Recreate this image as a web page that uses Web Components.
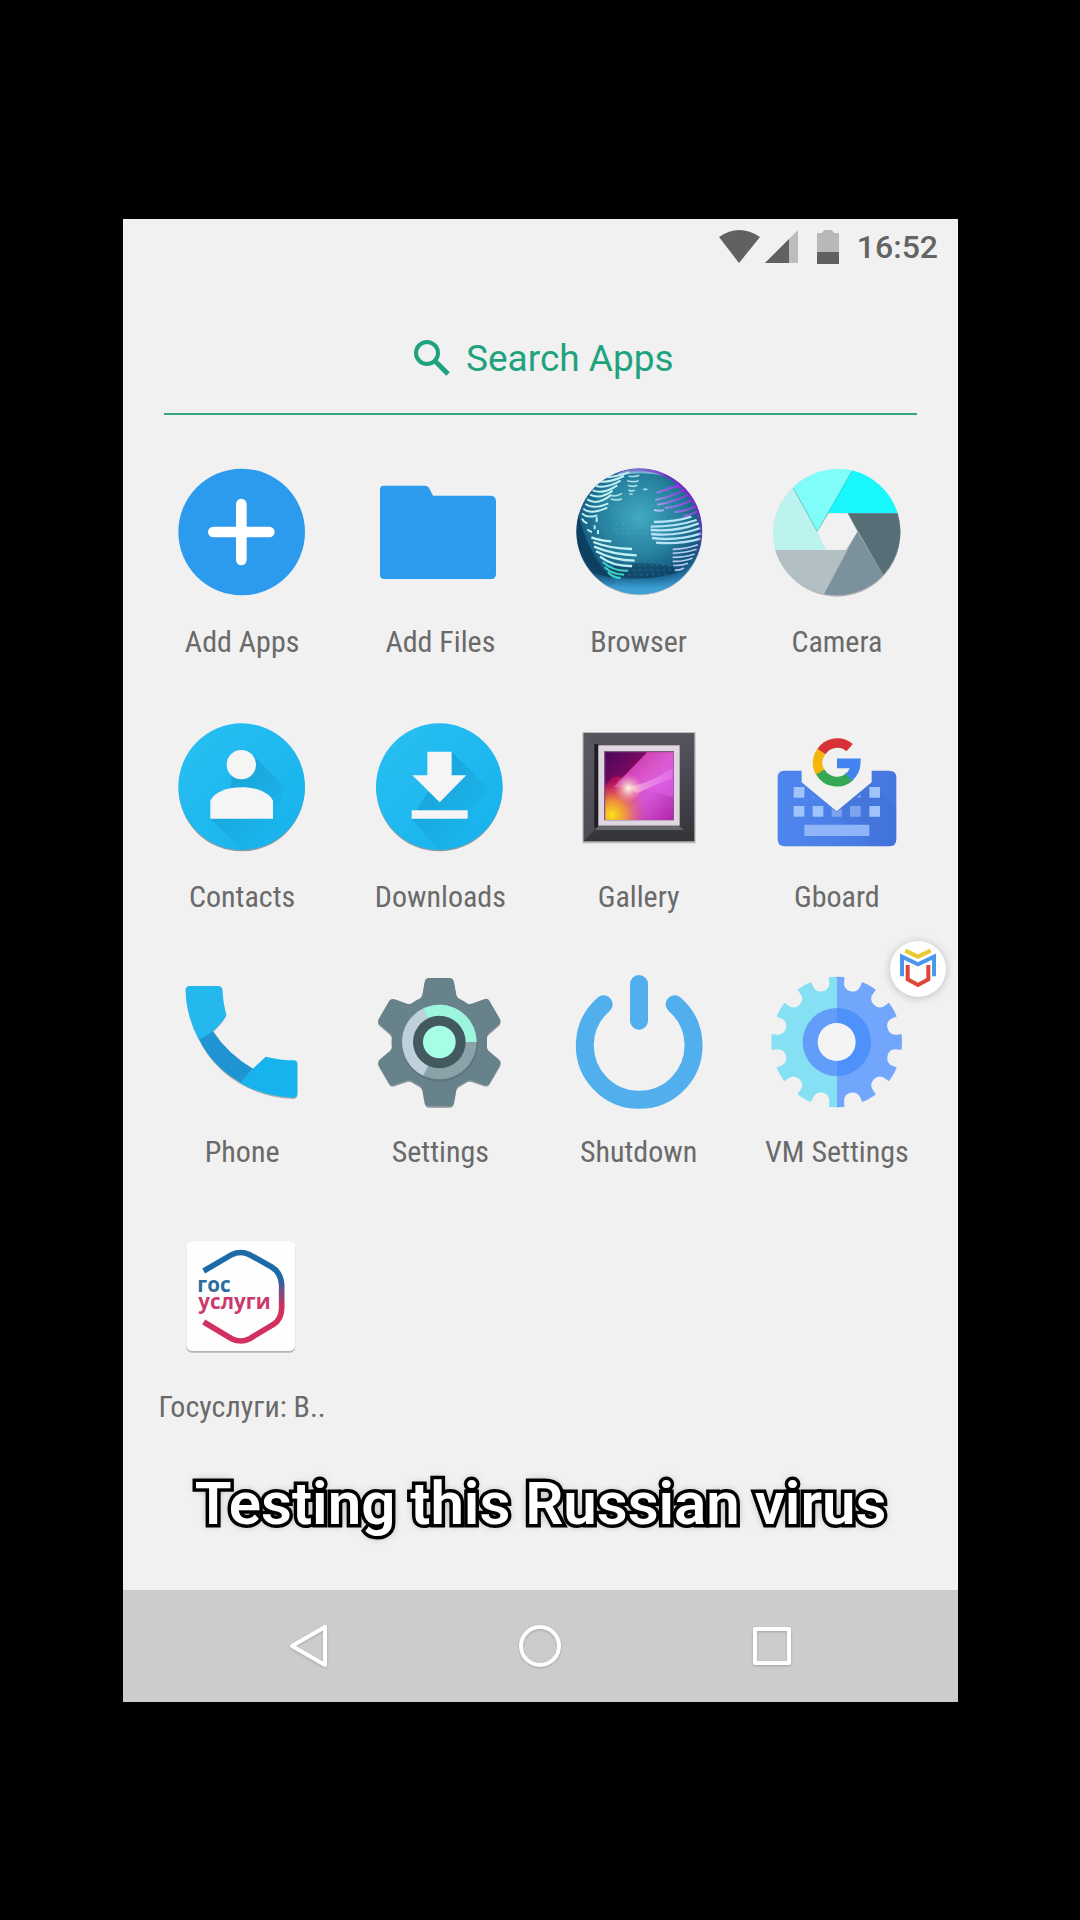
<!DOCTYPE html>
<html lang="en">
<head>
<meta charset="utf-8">
<meta name="viewport" content="width=device-width, initial-scale=1">
<title>App drawer</title>
<style>
  body { margin: 0; background: #000; font-family: "Roboto Condensed", Roboto, "Noto Sans", sans-serif; }
</style>
</head>
<body>
<app-stage>
  <phone-screen>
    <status-bar slot="status" time="16:52"></status-bar>
    <search-field placeholder="Search Apps"></search-field>
    <app-grid>
      <app-tile label="Add Apps">
        <svg viewBox="63 57 432 432" aria-hidden="true">
          <circle cx="278" cy="276" r="190" fill="#2c9bee"/>
          <path d="M277 192V360M193 276H361" stroke="#fff" stroke-width="32" stroke-linecap="round"/>
        </svg>
      </app-tile>
      <app-tile label="Add Files">
        <svg viewBox="657 57 432 432" aria-hidden="true">
          <path d="M704 137H828Q838 137 843 149L852 167H1024Q1041 167 1041 184V402Q1041 417 1026 417H706Q693 417 693 404V149Q693 137 704 137Z" fill="#2c9bee"/>
        </svg>
      </app-tile>
      <app-tile label="Browser">
        <svg viewBox="51 57 432 432" aria-hidden="true">
          <defs>
            <radialGradient id="ocean" cx=".5" cy=".38" r=".62"><stop offset="0" stop-color="#42a9c0"/><stop offset=".5" stop-color="#26819f"/><stop offset=".85" stop-color="#125279"/><stop offset="1" stop-color="#2d7fb4"/></radialGradient>
            <linearGradient id="pole" x1="0" y1="0" x2="0" y2="1"><stop offset="0" stop-color="#2788bd" stop-opacity="0"/><stop offset=".7" stop-color="#3d9fd4"/></linearGradient>
            <linearGradient id="neon" x1="300" y1="220" x2="400" y2="130" gradientUnits="userSpaceOnUse"><stop offset="0" stop-color="#b9e8f8"/><stop offset=".5" stop-color="#8f6fe0"/><stop offset="1" stop-color="#8a25d8"/></linearGradient>
            <linearGradient id="rim" x1="0" y1="1" x2="1" y2="0"><stop offset=".6" stop-color="#8227d0" stop-opacity="0"/><stop offset=".9" stop-color="#8227d0"/></linearGradient>
            <clipPath id="disc"><circle cx="268" cy="274" r="189"/></clipPath>
          </defs>
          <circle cx="268" cy="277" r="189" fill="#7b8fa0" opacity=".5"/>
          <g clip-path="url(#disc)" fill="none">
            <circle cx="268" cy="274" r="189" fill="url(#ocean)"/>
            <path d="M80 200Q110 350 200 430L150 450L70 350Z" fill="#0a3656" opacity=".7"/>
            <ellipse cx="275" cy="392" rx="105" ry="22" fill="#0b3456" opacity=".5"/>
            <path d="M130 400Q270 440 400 390V470H130Z" fill="url(#pole)"/>
            <path d="M205 100Q250 78 330 92L345 108Q270 92 205 108Z" fill="#7eb3d4"/>
            <g stroke="#bff0f4" stroke-width="6">
              <path d="M165 112Q195 112 238 96M150 125Q180 128 222 108M138 138Q170 146 212 122M128 151Q160 164 202 136M120 164Q150 180 188 152M112 178Q140 198 182 166M106 192Q130 210 175 190M100 206Q120 226 172 203M96 220Q112 236 142 226"/>
              <path d="M180 165Q198 172 216 160M182 177Q198 182 216 177M236 108Q254 112 268 106M232 122Q250 128 266 122M234 136Q248 142 262 136M236 150Q244 156 254 150M238 162H248M280 148H292" stroke-width="5" opacity=".85"/>
              <path d="M96 236Q102 248 112 250M112 268Q118 274 126 276M140 232V246M134 256V268M144 270V282"/>
              <path d="M124 292Q150 302 184 304M130 306Q180 326 246 327M132 320Q188 344 260 346M138 334Q190 362 254 362M150 350Q190 380 246 378" stroke-width="7"/>
              <path d="M158 366Q190 394 234 392M164 382Q188 404 222 404M174 396Q190 414 212 414" stroke="#3ed3c4"/>
              <path d="M312 246Q376 246 424 230M302 260Q380 260 440 240M302 270Q380 276 446 250M303 282Q380 290 452 264M306 294Q380 304 454 280M318 308Q390 314 452 296" stroke="#b8e2f6" stroke-width="7"/>
              <path d="M368 328Q410 326 444 314M368 340Q410 338 440 328M368 352Q406 352 434 342M368 364Q400 366 428 354M370 376Q396 378 414 370M374 390Q388 392 402 384" stroke="#b8c8f0" stroke-width="5"/>
            </g>
            <path d="M320 158Q350 150 396 132M316 180Q360 172 412 146M322 194Q366 188 424 160M312 210Q330 214 342 210M345 204Q390 200 434 176M356 142H390M374 216Q410 214 442 196M400 228Q426 224 448 210" stroke="url(#neon)" stroke-width="6"/>
            <g stroke="#6cc3d4" stroke-width="3" stroke-dasharray="4 14" opacity=".45"><path d="M210 235H300M200 250H300M195 265H300M200 280H300M230 376H370M232 390H366M236 404H360"/></g>
            <circle cx="268" cy="274" r="185" stroke="url(#rim)" stroke-width="9"/>
          </g>
        </svg>
      </app-tile>
      <app-tile label="Camera">
        <svg viewBox="645 57 432 432" aria-hidden="true">
          <circle cx="861" cy="280" r="190" fill="#777" opacity=".5"/>
          <path d="M905 91A190 190 0 0 1 1043 220H830Z" fill="#18f7fb"/>
          <path d="M1043 220A190 190 0 0 1 1000 405L893 220Z" fill="#566e76"/>
          <path d="M1000 405A190 190 0 0 1 822 462L922 275Z" fill="#7b929c"/>
          <path d="M822 462A190 190 0 0 1 675 330H890Z" fill="#b2c0c4"/>
          <path d="M675 330A190 190 0 0 1 730 142L832 330Z" fill="#bdf3ef"/>
          <path d="M730 142A190 190 0 0 1 907 91L802 275Z" fill="#80fdf8"/>
          <path d="M730 145L802 275L905 95" fill="none" stroke="#37b7b5" stroke-width="3" opacity=".6"/>
          <path d="M836 220H893L922 275L888 330H828L802 275Z" fill="#f1f1f1"/>
        </svg>
      </app-tile>
      <app-tile label="Contacts">
        <svg viewBox="63 42 432 432" aria-hidden="true">
          <defs>
            <linearGradient id="sky" x1="0" y1="0" x2="1" y2="1"><stop offset="0" stop-color="#29bff2"/><stop offset="1" stop-color="#16b2ed"/></linearGradient>
            <linearGradient id="cast" x1="0" y1="0" x2="1" y2="1"><stop offset=".2" stop-color="#0c82b4" stop-opacity=".4"/><stop offset=".8" stop-color="#0c82b4" stop-opacity="0"/></linearGradient>
          </defs>
          <circle cx="278" cy="265" r="189" fill="#66757d" opacity=".7"/>
          <circle cx="278" cy="260" r="190" fill="url(#sky)"/>
          <path d="M309 162L408 261L373 356L430 372Q365 450 278 450L186 356L245 270L248 224Z" fill="url(#cast)"/>
          <circle cx="277" cy="194" r="44" fill="#f5f5f5"/>
          <path d="M184 356V302C196 278 232 262 278 262S360 278 372 302V356Z" fill="#f5f5f5"/>
        </svg>
      </app-tile>
      <app-tile label="Downloads">
        <svg viewBox="657 42 432 432" aria-hidden="true">
          <defs>
            <linearGradient id="sky2" x1="0" y1="0" x2="1" y2="1"><stop offset="0" stop-color="#29bff2"/><stop offset="1" stop-color="#16b2ed"/></linearGradient>
            <linearGradient id="cast2" x1="0" y1="0" x2="1" y2="1"><stop offset=".2" stop-color="#0c82b4" stop-opacity=".4"/><stop offset=".8" stop-color="#0c82b4" stop-opacity="0"/></linearGradient>
          </defs>
          <circle cx="871" cy="265" r="189" fill="#66757d" opacity=".7"/>
          <circle cx="871" cy="260" r="190" fill="url(#sky2)"/>
          <path d="M908 155L1025 272L956 332V356L1000 400Q940 450 871 450L788 356Z" fill="url(#cast2)"/>
          <path d="M835 155H908V226H952L872 307L790 226H835ZM788 331H956V356H788Z" fill="#f5f5f5"/>
        </svg>
      </app-tile>
      <app-tile label="Gallery">
        <svg viewBox="51 42 432 432" aria-hidden="true">
          <defs>
            <linearGradient id="frame" x1="0" y1="0" x2="0" y2="1"><stop offset="0" stop-color="#57565f"/><stop offset="1" stop-color="#353439"/></linearGradient>
            <linearGradient id="art" x1="0" y1="0" x2="1" y2="1"><stop offset="0" stop-color="#4a0858"/><stop offset=".3" stop-color="#b80e5c"/><stop offset=".48" stop-color="#d94ca4"/><stop offset=".62" stop-color="#d659da"/><stop offset="1" stop-color="#b326a8"/></linearGradient>
            <radialGradient id="glow" cx="185" cy="345" r="105" gradientUnits="userSpaceOnUse"><stop offset="0" stop-color="#f8e418"/><stop offset=".4" stop-color="#f3a02a" stop-opacity=".85"/><stop offset="1" stop-color="#e03a60" stop-opacity="0"/></radialGradient>
            <radialGradient id="flare" cx="235" cy="265" r="42" gradientUnits="userSpaceOnUse"><stop offset="0" stop-color="#fffce0"/><stop offset="1" stop-color="#ffb0b0" stop-opacity="0"/></radialGradient>
            <linearGradient id="beam" x1="235" y1="270" x2="370" y2="215" gradientUnits="userSpaceOnUse"><stop offset="0" stop-color="#ffd9f0"/><stop offset="1" stop-color="#f48cf4" stop-opacity=".5"/></linearGradient>
          </defs>
          <rect x="97" y="96" width="340" height="334" fill="#bcbcbc"/>
          <rect x="101" y="99" width="332" height="325" fill="url(#frame)"/>
          <path d="M101 424L133 390V135L101 99Z" fill="#5d5c62" opacity=".6"/>
          <rect x="133" y="132" width="12" height="250" fill="#1f1e24"/>
          <path d="M146 378H388L402 390H134Z" fill="#66666a"/>
          <rect x="145" y="136" width="244" height="241" fill="#dfd6e2"/>
          <rect x="162" y="153" width="210" height="208" fill="#7a5c80"/>
          <rect x="166" y="157" width="204" height="203" fill="url(#art)"/>
          <path d="M292 157H370V290L240 262L190 262Z" fill="#dc5fe4" opacity=".65"/>
          <path d="M166 157H290L215 235Q190 215 166 260Z" fill="#4c0760" opacity=".6"/>
          <path d="M232 262Q300 250 368 205V235Q300 260 262 280Z" fill="url(#beam)" opacity=".6"/>
          <rect x="166" y="157" width="204" height="203" fill="url(#glow)"/>
          <rect x="166" y="157" width="204" height="203" fill="url(#flare)"/>
        </svg>
      </app-tile>
      <app-tile label="Gboard">
        <svg viewBox="645 42 432 432" aria-hidden="true">
          <defs><linearGradient id="deck" x1="0" y1="0" x2="1" y2="0"><stop offset="0" stop-color="#4f86ee"/><stop offset="1" stop-color="#4577df"/></linearGradient></defs>
          <path d="M702 212H755V247L860 334L965 247V212H1018Q1039 212 1039 233V418Q1039 439 1018 439H704Q683 439 683 418V233Q683 212 702 212Z" fill="url(#deck)"/>
          <path d="M860 334L965 247L1039 320V420Q1036 439 1018 439H965Z" fill="#3560c4" opacity=".15"/>
          <path d="M731 261H763V293H731ZM958 261H990V293H958ZM731 318H763V350H731ZM788 318H820V350H788ZM958 318H990V350H958Z" fill="#9fc3fb"/>
          <path d="M900 318H932V350H900ZM845 325L860 337L875 325V350H845ZM788 288L795 293H788ZM925 288L932 283V293H920Z" fill="#7ea4ee"/>
          <path d="M763 374H958V408H763Z" fill="#8fb5f8"/>
          <g fill="none" stroke-width="29">
            <path d="M899 143A57 57 0 0 0 814 155" stroke="#d83238"/>
            <path d="M814 155A57 57 0 0 0 811 218" stroke="#f4b60c"/>
            <path d="M811 216A57 57 0 0 0 901 228" stroke="#35a853"/>
            <path d="M896 232A57 57 0 0 0 917 190H861" stroke="#4383f0"/>
          </g>
        </svg>
      </app-tile>
      <app-tile label="Phone">
        <svg viewBox="63 27 432 432" aria-hidden="true">
          <path d="M122 81H207Q219 81 220 92Q221 130 232 168Q220 190 194 215Q235 280 310 328L350 293Q395 303 434 304Q445 304 445 315V403Q445 416 434 417Q345 414 270 370Q190 322 150 240Q112 170 110 94Q110 81 122 81Z" fill="#8a949a" opacity=".7"/>
          <path d="M150 238L190 212Q235 280 312 326L275 368Q190 320 150 238Z" fill="#2094d2"/>
          <path d="M122 78H207Q219 78 220 89Q222 130 232 166Q220 188 192 214L150 240Q112 170 110 91Q110 78 122 78Z" fill="#25b8ef"/>
          <path d="M272 368L312 326L350 290Q395 301 434 301Q445 301 445 312V400Q445 413 434 413Q345 410 272 368Z" fill="#17b3ef"/>
        </svg>
      </app-tile>
      <app-tile label="Settings">
        <svg viewBox="657 27 432 432" aria-hidden="true">
          <defs>
            <g id="cog">
              <circle cx="871" cy="246" r="143"/>
              <path id="t" d="M827 66Q829 54 840 54H902Q912 54 915 66L922 105Q928 122 960 134L871 246L782 134Q814 122 820 105Z"/>
              <use href="#t" transform="rotate(60 871 246)"/><use href="#t" transform="rotate(120 871 246)"/><use href="#t" transform="rotate(180 871 246)"/><use href="#t" transform="rotate(240 871 246)"/><use href="#t" transform="rotate(300 871 246)"/>
            </g>
          </defs>
          <use href="#cog" y="5" fill="#4b5a61" opacity=".6"/>
          <use href="#cog" fill="#68828b"/>
          <circle cx="872" cy="251" r="114" fill="#4f666e" opacity=".5"/>
          <circle cx="871" cy="246" r="112" fill="#8ba2a9"/>
          <path d="M871 246L823 145A112 112 0 0 0 823 347Z" fill="#bfd0da"/>
          <path d="M871 246L823 145A112 112 0 0 1 983 246Z" fill="#9cf6de"/>
          <circle cx="871" cy="246" r="79" fill="#435960"/>
          <circle cx="871" cy="246" r="49" fill="#a5fee5"/>
        </svg>
      </app-tile>
      <app-tile label="Shutdown">
        <svg viewBox="51 27 432 432" aria-hidden="true">
          <path d="M161 133A163 163 0 1 0 374 133M267 72V182" fill="none" stroke="#52afee" stroke-width="54" stroke-linecap="round"/>
        </svg>
      </app-tile>
      <app-tile label="VM Settings">
        <svg viewBox="645 27 432 432" aria-hidden="true">
          <defs>
            <path id="b" d="M830 36L834 62Q836 88 860 88Q884 88 886 62L890 36Z"/>
            <mask id="teeth" maskUnits="userSpaceOnUse" x="645" y="27" width="432" height="432">
              <circle cx="860" cy="246" r="196" fill="#fff"/>
              <use href="#b" transform="rotate(15 860 246)"/><use href="#b" transform="rotate(45 860 246)"/><use href="#b" transform="rotate(75 860 246)"/>
              <use href="#b" transform="rotate(105 860 246)"/><use href="#b" transform="rotate(135 860 246)"/><use href="#b" transform="rotate(165 860 246)"/>
              <use href="#b" transform="rotate(195 860 246)"/><use href="#b" transform="rotate(225 860 246)"/><use href="#b" transform="rotate(255 860 246)"/>
              <use href="#b" transform="rotate(285 860 246)"/><use href="#b" transform="rotate(315 860 246)"/><use href="#b" transform="rotate(345 860 246)"/>
            </mask>
          </defs>
          <g mask="url(#teeth)"><path d="M645 27H861V459H645Z" fill="#84e0f2"/><path d="M861 27H1077V459H861Z" fill="#71a6fc"/></g>
          <circle cx="860" cy="246" r="102" fill="#629dfa"/>
          <path d="M861 144A102 102 0 0 1 861 348Z" fill="#4f91fb"/>
          <circle cx="860" cy="246" r="57" fill="#f4f4f4"/>
        </svg>
      </app-tile>
      <app-tile label="Госуслуги: В..">
        <svg viewBox="93 12 432 432" aria-hidden="true">
          <defs><linearGradient id="flag" x1="0" y1="88" x2="0" y2="372" gradientUnits="userSpaceOnUse"><stop offset=".3" stop-color="#1d6ba6"/><stop offset=".6" stop-color="#d0315f"/></linearGradient></defs>
          <rect x="142" y="68" width="327" height="330" rx="17" fill="#b4b4b4"/>
          <rect x="142" y="64" width="327" height="329" rx="17" fill="#fefefe"/>
          <path d="M194 153L278 104Q304 91 332 104L398 141Q426 158 428 195V263Q428 298 402 314L332 356Q304 370 278 356L194 306" fill="none" stroke="url(#flag)" stroke-width="17"/>
          <text font-family="Open Sans, sans-serif" font-weight="700" font-size="62" fill="#2a6ca0"><tspan x="175" y="217">гос</tspan><tspan x="178" y="268" fill="#cc3a6c">услуги</tspan></text>
        </svg>
      </app-tile>
    </app-grid>
    <video-caption>Testing this Russian virus</video-caption>
    <nav-bar slot="nav"></nav-bar>
    <float-badge slot="float"></float-badge>
  </phone-screen>
</app-stage>

<script>
  const define = (name, html, setup) => customElements.define(name, class extends HTMLElement {
    constructor() {
      super();
      this.attachShadow({ mode: 'open' }).innerHTML = html;
    }
    connectedCallback() { if (setup) setup(this, this.shadowRoot); }
  });

  define('app-stage', `
    <style>
      :host { display: flex; flex-direction: column; justify-content: center; min-height: 100vh; padding: 0 122px 0 123px; box-sizing: border-box; background: #000; }
    </style><slot></slot>`);

  define('phone-screen', `
    <style>
      :host { display: flex; flex-direction: column; position: relative; background: #f1f1f1; }
      main { display: flex; flex-direction: column; }
    </style>
    <slot name="status"></slot><main><slot></slot></main><slot name="nav"></slot><slot name="float"></slot>`);

  define('status-bar', `
    <style>
      :host { display: flex; align-items: center; justify-content: flex-end; height: 56px; padding-right: 20px; font: 500 32px/40px Roboto, sans-serif; color: #646464; }
      svg { display: block; height: 34px; }
      .wifi { width: 41px; margin-right: 5px; }
      .cell { width: 33px; margin-right: 19px; }
      .battery { width: 22px; margin-right: 18px; }
    </style>
    <svg class="wifi" viewBox="0 0 41 34" aria-hidden="true"><path d="M0 7Q20 -7 41 7L20 33Z" fill="#616161"/></svg>
    <svg class="cell" viewBox="0 0 33 34" aria-hidden="true"><path d="M0 33L33 0V33Z" fill="#bdbdbd"/><path d="M0 33L24 9V33Z" fill="#616161"/></svg>
    <svg class="battery" viewBox="0 0 22 34" aria-hidden="true"><path d="M0 3H5L7 0H15L17 3H22V22H0Z" fill="#b8b8b8"/><path d="M0 22H22V34H0Z" fill="#616161"/></svg>
    <time></time>`,
    (el, root) => { root.querySelector('time').textContent = el.getAttribute('time'); });

  define('search-field', `
    <style>
      :host { display: block; margin: 0 41px; padding: 60px 0 30px; border-bottom: 2px solid #35a585; }
      label { display: flex; align-items: center; justify-content: center; gap: 15px; padding-left: 10px; }
      svg { display: block; width: 38px; height: 38px; }
      input { width: 212px; height: 48px; padding: 0; border: 0; outline: 0; background: none; font: 400 37px/48px Roboto, sans-serif; color: #1fa37e; }
      input::placeholder { color: #1fa37e; opacity: 1; }
    </style>
    <label><svg viewBox="0 0 38 38" aria-hidden="true"><circle cx="14" cy="13" r="11" fill="none" stroke="#1fa37e" stroke-width="4"/><path d="M22 21L35 34" stroke="#1fa37e" stroke-width="5"/></svg><input type="text" aria-label="Search Apps"></label>`,
    (el, root) => { root.querySelector('input').placeholder = el.getAttribute('placeholder'); });

  define('app-grid', `
    <style>
      :host { display: grid; grid-template-columns: repeat(4, minmax(0, 1fr)); row-gap: 54px; padding: 44px 22px 0 20px; }
    </style><slot></slot>`);

  define('app-tile', `
    <style>
      :host { display: block; min-width: 0; }
      button { display: flex; flex-direction: column; align-items: center; gap: 21px; width: 100%; padding: 0; border: 0; background: none; font: 400 30px/36px "Roboto Condensed", Roboto, sans-serif; color: #6a6a6a; cursor: pointer; }
      ::slotted(svg) { display: block; width: 144px; height: 144px; }
      span { white-space: nowrap; }
    </style>
    <button type="button"><slot></slot><span></span></button>`,
    (el, root) => { root.querySelector('span').textContent = el.getAttribute('label'); });

  define('video-caption', `
    <style>
      :host { display: block; padding: 43px 0 50px; text-align: center; font: 600 60px/72px Roboto, sans-serif; color: #fff; -webkit-text-stroke: 7px #000; paint-order: stroke fill; stroke-linejoin: round; text-shadow: 0 0 8px rgba(0, 0, 0, .5); white-space: nowrap; }
    </style><slot></slot>`);

  define('nav-bar', `
    <style>
      :host { display: grid; grid-template-columns: repeat(3, 1fr); height: 112px; padding: 0 70px; background: #ccc; }
      button { display: grid; place-items: center; border: 0; padding: 0; background: none; cursor: pointer; }
      svg { display: block; width: 48px; height: 48px; fill: none; stroke: #fff; stroke-width: 4; stroke-linejoin: round; filter: drop-shadow(0 1px 1px rgba(0, 0, 0, .2)); }
    </style>
    <button type="button" aria-label="Back"><svg viewBox="0 0 48 48"><path d="M40 5V43L7 24Z"/></svg></button>
    <button type="button" aria-label="Home"><svg viewBox="0 0 48 48"><circle cx="24" cy="24" r="19"/></svg></button>
    <button type="button" aria-label="Recents"><svg viewBox="0 0 48 48"><path d="M7 7H41V41H7Z"/></svg></button>`);

  define('float-badge', `
    <style>
      :host { position: absolute; top: 722px; right: 12px; }
      button { display: block; width: 56px; height: 56px; padding: 0; border: 0; border-radius: 50%; background: #fff; box-shadow: 0 1px 8px rgba(0, 0, 0, .22); cursor: pointer; }
      svg { display: block; width: 56px; height: 56px; }
    </style>
    <button type="button" aria-label="VM menu"><svg viewBox="1020 724 168 168" fill="none">
      <path d="M1066 753L1104 771L1142 753" stroke="#e9c92f" stroke-width="12"/>
      <path d="M1056 830V771L1104 794L1152 771V830" stroke="#4b97e8" stroke-width="12"/>
      <path d="M1073 796V839L1104 856L1135 839V796" stroke="#e0453a" stroke-width="12"/>
    </svg></button>`);
</script>
</body>
</html>
